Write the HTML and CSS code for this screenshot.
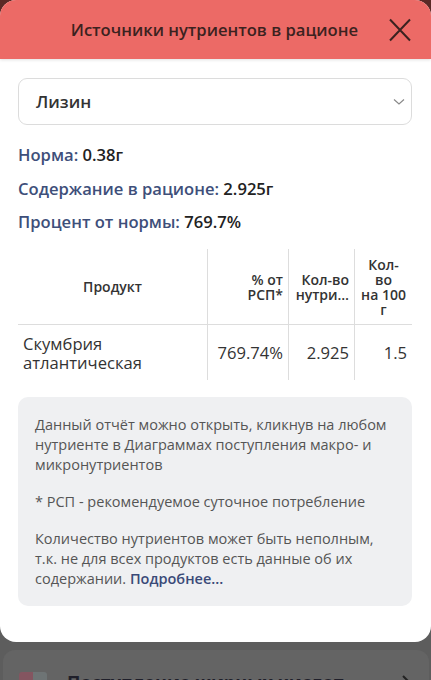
FILE: index.html
```html
<!DOCTYPE html>
<html lang="ru">
<head>
<meta charset="utf-8">
<link rel="stylesheet" href="styles.css">
</head>
<body>
<div class="modal">
  <div class="modal-header">
    <div class="modal-title">Источники нутриентов в рационе</div>
    <svg class="close" width="22" height="24" viewBox="0 0 22 24"><path d="M1 1.5 L21 22.5 M21 1.5 L1 22.5" stroke="#3b2220" stroke-width="2" fill="none"/></svg>
  </div>
  <div class="modal-body">
    <div class="select">
      <span>Лизин</span>
      <svg width="12" height="8" viewBox="0 0 12 8"><path d="M1 1.5 L6 6 L11 1.5" stroke="#8a8a8a" stroke-width="1.2" fill="none"/></svg>
    </div>
    <div class="stats">
      <div class="stat"><span class="lbl">Норма:</span> 0.38г</div>
      <div class="stat"><span class="lbl">Содержание в рационе:</span> 2.925г</div>
      <div class="stat"><span class="lbl">Процент от нормы:</span> 769.7%</div>
    </div>
    <table class="tbl">
      <thead>
        <tr>
          <th class="c1">Продукт</th>
          <th class="c2">% от<br>РСП*</th>
          <th class="c3">Кол-во<br>нутри…</th>
          <th class="c4">Кол-<br>во<br>на 100<br>г</th>
        </tr>
      </thead>
      <tbody>
        <tr>
          <td class="c1">Скумбрия<br>атлантическая</td>
          <td class="c2">769.74%</td>
          <td class="c3">2.925</td>
          <td class="c4">1.5</td>
        </tr>
      </tbody>
    </table>
    <div class="info">
      <p>Данный отчёт можно открыть, кликнув на любом нутриенте в Диаграммах поступления макро- и микронутриентов</p>
      <p>* РСП - рекомендуемое суточное потребление</p>
      <p>Количество нутриентов может быть неполным, т.к. не для всех продуктов есть данные об их содержании. <a class="more">Подробнее...</a></p>
    </div>
  </div>
</div>
<div class="under-card">
  <div class="squares"><span class="sq a"></span><span class="sq b"></span></div>
  <div class="under-title">Поступление жирных кислот</div>
  <svg class="chev" width="10" height="16" viewBox="0 0 10 16"><path d="M2 2 L8 8 L2 14" stroke="#222" stroke-width="2" fill="none"/></svg>
</div>
</body>
</html>
```

FILE: styles.css
```css
html, body {
  margin: 0;
  padding: 0;
}
body {
  width: 431px;
  height: 680px;
  overflow: hidden;
  font-family: "Open Sans", "Noto Sans", sans-serif;
  background: linear-gradient(#5a2926 0, #5a2926 30px, #5d5d5d 30px);
}
.modal {
  background: #fff;
  border-radius: 16px;
  height: 642px;
  overflow: hidden;
  box-sizing: border-box;
}
.modal-header {
  height: 59px;
  background: #ec6a66;
  display: flex;
  align-items: center;
  justify-content: flex-end;
  padding-right: 20px;
  box-shadow: 0 1px 3px rgba(0,0,0,0.12);
  position: relative;
}
.modal-title {
  flex: 1;
  text-align: right;
  padding-right: 31px;
  font-size: 16.6px;
  font-weight: 600;
  color: #3b2220;
}
.close {
  display: block;
  margin-top: 1px;
}
.modal-body {
  padding: 19px 19px 0 18px;
}
.select {
  height: 47px;
  border: 1px solid #dcdcdc;
  border-radius: 9px;
  box-sizing: border-box;
  display: flex;
  align-items: center;
  justify-content: space-between;
  padding: 0 6px 0 17px;
  font-size: 17px;
  font-weight: 600;
  color: #333;
}
.stats {
  padding-top: 20px;
}
.stat {
  font-size: 16.6px;
  font-weight: 600;
  color: #222;
  line-height: 20px;
  margin-bottom: 13.5px;
}
.lbl {
  color: #3e4f7a;
}
.tbl {
  width: 394px;
  border-collapse: collapse;
  margin-top: 17px;
  color: #333;
}
.tbl th {
  font-size: 14px;
  font-weight: 600;
  line-height: 15px;
  height: 75px;
  padding: 0 5px;
  vertical-align: middle;
  border-bottom: 1px solid #ddd;
}
.tbl td {
  font-size: 16.6px;
  line-height: 19px;
  height: 55px;
  padding: 0 5px;
  vertical-align: middle;
  color: #333;
}
.tbl .c1 { width: 179px; }
.tbl .c2 { width: 70px; }
.tbl .c3 { width: 55px; }
.tbl th.c1 { text-align: center; }
.tbl td.c1 { text-align: left; }
.tbl .c2, .tbl .c3 { text-align: right; }
.tbl th.c4 { text-align: center; }
.tbl td.c4 { text-align: right; }
.tbl .c2, .tbl .c3, .tbl .c4 { border-left: 1px solid #ddd; }
.info {
  margin-top: 17px;
  background: #eff0f2;
  border-radius: 10px;
  padding: 18px 17px 12px 17px;
  font-size: 14.5px;
  line-height: 20px;
  color: #555;
  height: 209px;
  box-sizing: border-box;
}
.info p {
  margin: 0 0 17px 0;
}
.more {
  color: #3a4a78;
  font-weight: 600;
}
.under-card {
  margin: 8px 2px 0 3px;
  height: 60px;
  background: #646464;
  border-radius: 12px 12px 0 0;
  display: flex;
  align-items: flex-start;
  padding: 22px 18px 0 16px;
  box-sizing: border-box;
}
.squares {
  display: flex;
}
.sq {
  width: 14px;
  height: 14px;
  display: block;
}
.sq.a { background: #845560; border-radius: 3px 0 0 0; }
.sq.b { background: #6e7475; border-radius: 0 3px 0 0; }
.under-title {
  margin-left: 20px;
  font-size: 18px;
  font-weight: 700;
  color: #1f1f2a;
  flex: 1;
  line-height: 20px;
}
.chev {
  margin-top: 2px;
}
```
